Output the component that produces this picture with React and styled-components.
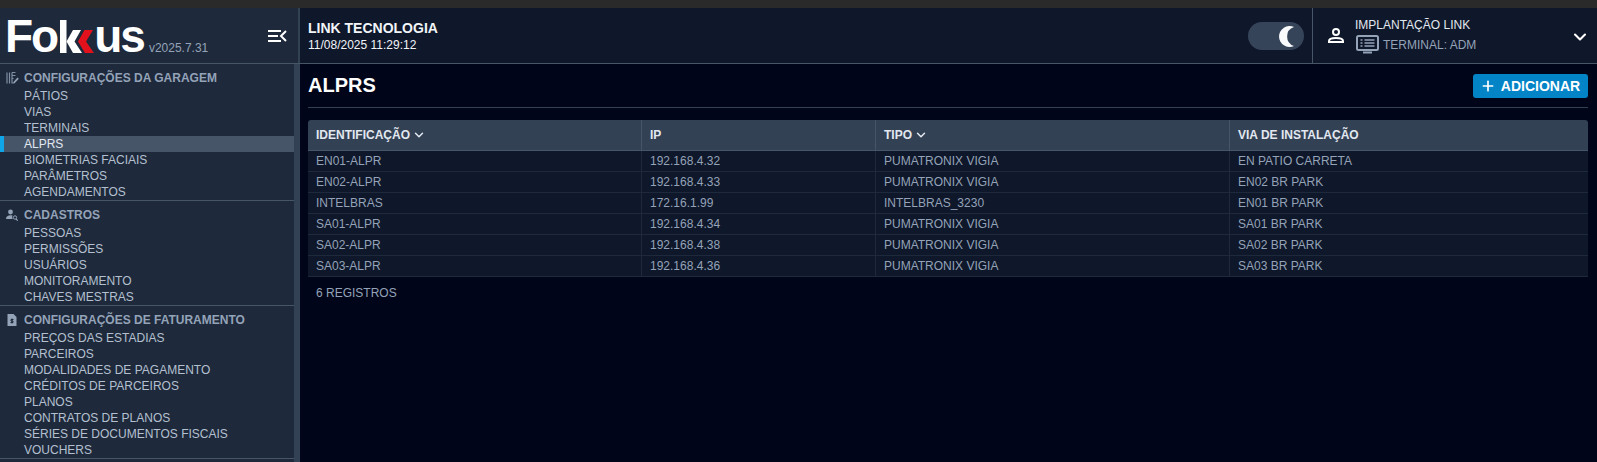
import React from "react";
import styled, { createGlobalStyle } from "styled-components";
import { ChevronDown, Plus } from "lucide-react";

const Global = createGlobalStyle`
  html, body { margin: 0; padding: 0; height: 100%; background: #010519; overflow: hidden; }
  #root { height: 100%; }
  * { box-sizing: border-box; }
`;

const Page = styled.div`
  height: 462px; width: 1597px; display: flex; flex-direction: column;
  font-family: "Liberation Sans", Arial, sans-serif; font-size: 12px; color: #cbd5e1;
  background: #010519;
`;
const TopStrip = styled.div`height: 8px; background: #2a2a2a; flex: none;`;
const Header = styled.header`
  height: 56px; flex: none; display: flex; background: #0f172a; border-bottom: 1px solid #475569;
`;
const Brand = styled.div`
  width: 300px; flex: none; display: flex; align-items: flex-end; padding: 0 0 9px 5px;
  background: #1e293b; border-right: 2px solid #334155; position: relative;
`;
const Logo = styled.div`
  display: flex; align-items: flex-end; height: 34px;
  font-family: "Liberation Sans", sans-serif; font-weight: 700; font-size: 46px; line-height: 34px; color: #fff;
`;
const LogoLetters = styled.span`display: block; height: 34px; line-height: 33px; letter-spacing: ${p => p.$spacing || 0}px;`;
const LogoMark = styled.svg`width: 35px; height: 33px; flex: none; margin: 0 ${p => p.$right}px 1px ${p => p.$left}px;`;
const Version = styled.span`
  font-size: 12px; color: #94a3b8; margin: 0 0 -1px 5px; line-height: 14px;
`;
const MenuToggle = styled.svg`width: 19px; height: 14px; position: absolute; right: 11px; top: 21px;`;
const Company = styled.div`
  flex: 1; display: flex; flex-direction: column; padding: 12px 0 0 8px; color: #fff;
`;
const CompanyName = styled.div`font-size: 14px; font-weight: 700; line-height: 16px; color: #f1f5f9;`;
const CompanyDate = styled.div`font-size: 12px; line-height: 14px; margin-top: 2px; color: #f1f5f9;`;
const ThemeToggle = styled.div`
  width: 56px; height: 28px; border-radius: 14px; background: #36445a; margin: 14px 8px 0 0; flex: none;
  display: flex; align-items: center; justify-content: flex-end; padding-right: 9px;
`;
const UserBox = styled.div`
  width: 285px; flex: none; display: flex; border-left: 1px solid #475569; position: relative; padding: 0 0 0 13px;
`;
const UserIcon = styled.svg`width: 20px; height: 20px; margin-top: 18px; flex: none;`;
const UserText = styled.div`display: flex; flex-direction: column; margin-left: 9px; padding-top: 10px;`;
const UserName = styled.div`font-size: 12px; line-height: 14px; color: #e2e8f0;`;
const TerminalRow = styled.div`display: flex; align-items: center; gap: 4px; font-size: 12px; color: #94a3b8; margin-top: 3px; margin-left: 1px;`;
const Caret = styled(ChevronDown)`position: absolute; right: 7px; top: 19px; color: #fff;`;

const Body = styled.div`flex: 1; display: flex; min-height: 0;`;
const SideWrap = styled.aside`width: 300px; flex: none; display: flex; background: #1e293b; overflow: hidden;`;
const Nav = styled.nav`flex: 1; min-width: 0;`;
const ScrollTrack = styled.div`width: 6px; flex: none; background: #334155;`;
const Group = styled.section`border-bottom: 1px solid #475569; padding: 6px 0 0;`;
const GroupTitle = styled.div`
  display: flex; align-items: center; height: 16px; font-weight: 700; color: #94a3b8; margin-bottom: 2px;
  & > svg { width: 14px; margin: 0 5px 0 5px; flex: none; }
`;
const Item = styled.div`
  height: 16px; line-height: 16px; padding-left: ${p => p.$active ? 20 : 24}px; white-space: nowrap;
  color: ${p => p.$active ? "#e2e8f0" : "#b4c0d0"};
  background: ${p => p.$active ? "#475569" : "transparent"};
  border-left: ${p => p.$active ? "4px solid #0ea5e9" : "0"};
`;

const Main = styled.main`flex: 1; min-width: 0; padding: 0 9px 0 8px; background: #010519;`;
const TitleBar = styled.div`
  height: 44px; display: flex; justify-content: space-between; align-items: flex-start;
  border-bottom: 1px solid #334155; margin-bottom: 12px; padding-top: 10px;
`;
const Title = styled.h1`margin: 0; font-size: 20px; line-height: 23px; font-weight: 700; color: #fff;`;
const AddButton = styled.button`
  height: 24px; width: 115px; display: flex; align-items: center; justify-content: center; gap: 5px;
  border: 0; border-radius: 3px; background: #0284c7; color: #fff; font: 700 14px "Liberation Sans", sans-serif; padding: 0 1px 0 0;
`;
const Table = styled.div`border-radius: 3px 3px 0 0; overflow: hidden;`;
const Row = styled.div`
  display: grid; grid-template-columns: 333px 234px 354px 1fr;
  background: ${p => p.$head ? "#334155" : "#0f172a"};
  border-bottom: 1px solid ${p => p.$head ? "#475569" : "#1e293b"};
  height: ${p => p.$head ? 31 : 21}px;
`;
const Cell = styled.div`
  display: flex; align-items: center; gap: 2px; padding-left: 8px; white-space: nowrap;
  color: ${p => p.$head ? "#e2e8f0" : "#94a3b8"};
  font-weight: ${p => p.$head ? 700 : 400};
  border-left: ${p => p.$first ? "0" : `1px solid ${p.$head ? "#475569" : "#1e293b"}`};
`;
const Footer = styled.div`padding: 9px 0 0 8px; line-height: 14px; color: #94a3b8;`;

const groups = [
  { title: "CONFIGURAÇÕES DA GARAGEM", icon: "garage", items: ["PÁTIOS", "VIAS", "TERMINAIS", "ALPRS", "BIOMETRIAS FACIAIS", "PARÂMETROS", "AGENDAMENTOS"] },
  { title: "CADASTROS", icon: "people", items: ["PESSOAS", "PERMISSÕES", "USUÁRIOS", "MONITORAMENTO", "CHAVES MESTRAS"] },
  { title: "CONFIGURAÇÕES DE FATURAMENTO", icon: "bill", items: ["PREÇOS DAS ESTADIAS", "PARCEIROS", "MODALIDADES DE PAGAMENTO", "CRÉDITOS DE PARCEIROS", "PLANOS", "CONTRATOS DE PLANOS", "SÉRIES DE DOCUMENTOS FISCAIS", "VOUCHERS"] },
];
const rows = [
  ["EN01-ALPR", "192.168.4.32", "PUMATRONIX VIGIA", "EN PATIO CARRETA"],
  ["EN02-ALPR", "192.168.4.33", "PUMATRONIX VIGIA", "EN02 BR PARK"],
  ["INTELBRAS", "172.16.1.99", "INTELBRAS_3230", "EN01 BR PARK"],
  ["SA01-ALPR", "192.168.4.34", "PUMATRONIX VIGIA", "SA01 BR PARK"],
  ["SA02-ALPR", "192.168.4.38", "PUMATRONIX VIGIA", "SA02 BR PARK"],
  ["SA03-ALPR", "192.168.4.36", "PUMATRONIX VIGIA", "SA03 BR PARK"],
];

const GroupIcon = ({ kind }) => {
  if (kind === "garage") return (
    <svg viewBox="0 0 14 14" height="14" fill="none" stroke="#7f8ea3" strokeWidth="1.2">
      <path d="M2 1.500v11M4.500 1.500v11" /><path d="M7 1.500h3.500M7 4.500h3.500M7 7.500h1.500M7 12h2.500M7 1.500v11" />
      <path d="M8.500 11l4-4.500 1.300 1.200-4 4.300H8.500z" fill="#94a3b8" stroke="none" />
    </svg>
  );
  if (kind === "people") return (
    <svg viewBox="0 0 14 14" height="14" fill="#94a3b8">
      <circle cx="5.500" cy="4" r="2.400" /><path d="M1 11c0-2.500 2-3.700 4.500-3.700 .8 0 1.500.1 2 .3-.5 1-.4 2.400.2 3.400z" />
      <circle cx="10" cy="9.500" r="1.700" fill="none" stroke="#94a3b8" strokeWidth="1" /><path d="M11 11l1.800 1.600" stroke="#94a3b8" strokeWidth="1.100" />
    </svg>
  );
  return (
    <svg viewBox="0 0 14 14" height="14">
      <path d="M2.500 1h6l3 3v9h-9z" fill="#94a3b8" /><path d="M7 5.500v5M5.500 9.500h2.500v-1.500h-2v-1.500h2.500" stroke="#1e293b" strokeWidth="1" fill="none" />
    </svg>
  );
};

export default function App() {
  return (
    <Page>
      <Global />
      <TopStrip />
      <Header>
        <Brand>
          <Logo aria-label="Fokkus">
            <LogoLetters $spacing={-2}>Fo</LogoLetters>
            <LogoMark viewBox="0 0 35 33" $left={3} $right={-1}>
              <rect x="0" y="0" width="6.500" height="33" fill="#fff" />
              <path d="M13 10h8l-6.500 11.500L22 33h-9L6.500 21.500z" fill="#fff" />
              <path d="M24.500 10H33l-7 11.500L34 33h-9l-7-11.500z" fill="#e3111b" />
            </LogoMark>
            <LogoLetters $spacing={-2}>us</LogoLetters>
          </Logo>
          <Version>v2025.7.31</Version>
          <MenuToggle viewBox="0 0 19 14" fill="none" stroke="#fff" strokeWidth="2">
            <path d="M0 2h13M0 7h10M0 12h13M18 2l-5 5 5 5" />
          </MenuToggle>
        </Brand>
        <Company>
          <CompanyName>LINK TECNOLOGIA</CompanyName>
          <CompanyDate>11/08/2025 11:29:12</CompanyDate>
        </Company>
        <ThemeToggle>
          <svg width="16" height="21" viewBox="0 0 16 21"><path d="M15 1A10.500 10.500 0 1 0 15 20A10 10 0 0 1 15 1z" fill="#f8fafc" /></svg>
        </ThemeToggle>
        <UserBox>
          <UserIcon viewBox="0 0 20 20" fill="none" stroke="#fff" strokeWidth="2">
            <circle cx="10" cy="6" r="3" /><path d="M3 16v-1c0-2 3.500-3 7-3s7 1 7 3v1z" />
          </UserIcon>
          <UserText>
            <UserName>IMPLANTAÇÃO LINK</UserName>
            <TerminalRow>
              <svg width="23" height="19" viewBox="0 0 23 19" fill="none" stroke="#94a3b8" strokeWidth="2">
                <rect x="1" y="1" width="21" height="14" rx="1.500" /><path d="M4.500 5h2M8.500 5h10M4.500 8h2M8.500 8h10M4.500 11h2M8.500 11h10" strokeWidth="1.400" /><path d="M7 17.500h9" />
              </svg>
              TERMINAL: ADM
            </TerminalRow>
          </UserText>
          <Caret size={20} strokeWidth={2.500} />
        </UserBox>
      </Header>
      <Body>
        <SideWrap>
          <Nav>
            {groups.map(g => (
              <Group key={g.title}>
                <GroupTitle><GroupIcon kind={g.icon} />{g.title}</GroupTitle>
                {g.items.map(i => <Item key={i} $active={i === "ALPRS"}>{i}</Item>)}
              </Group>
            ))}
          </Nav>
          <ScrollTrack />
        </SideWrap>
        <Main>
          <TitleBar>
            <Title>ALPRS</Title>
            <AddButton><Plus size={16} strokeWidth={2.500} />ADICIONAR</AddButton>
          </TitleBar>
          <Table>
            <Row $head>
              <Cell $head $first>IDENTIFICAÇÃO <ChevronDown size={14} strokeWidth={2.500} /></Cell>
              <Cell $head>IP</Cell>
              <Cell $head>TIPO <ChevronDown size={14} strokeWidth={2.500} /></Cell>
              <Cell $head>VIA DE INSTALAÇÃO</Cell>
            </Row>
            {rows.map(r => (
              <Row key={r[0]}>
                {r.map((c, i) => <Cell key={i} $first={i === 0}>{c}</Cell>)}
              </Row>
            ))}
          </Table>
          <Footer>6 REGISTROS</Footer>
        </Main>
      </Body>
    </Page>
  );
}
